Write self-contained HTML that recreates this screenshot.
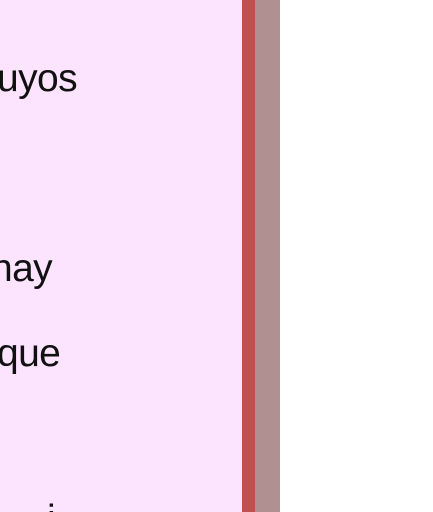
<!DOCTYPE html>
<html><head><style>
html,body{margin:0;padding:0;width:433px;height:512px;overflow:hidden;background:#fff;}
.w{position:absolute;left:0;top:0;width:433px;height:512px;overflow:hidden;}
.p{position:absolute;left:0;top:0;width:242px;height:512px;background:#fde4fe;}
.r{position:absolute;left:242px;top:0;width:13px;height:512px;background:#c0504d;}
.m{position:absolute;left:255px;top:0;width:25px;height:512px;background:#b09090;}
.t{position:absolute;font-family:"Liberation Sans",sans-serif;font-size:39px;color:#111;line-height:1;letter-spacing:-0.6px;}
</style></head><body><div class="w">
<div class="p"></div><div class="r"></div><div class="m"></div>
<div class="t" style="left:-10px;top:-27px;">r</div>
<div class="t" style="left:-3px;top:59px;">uyos</div>
<div class="t" style="left:-9px;top:249px;">nay</div>
<div class="t" style="left:-3px;top:334px;">que</div>
<div class="t" style="left:47px;top:500px;height:12px;overflow:hidden;">i</div>
</div></body></html>
